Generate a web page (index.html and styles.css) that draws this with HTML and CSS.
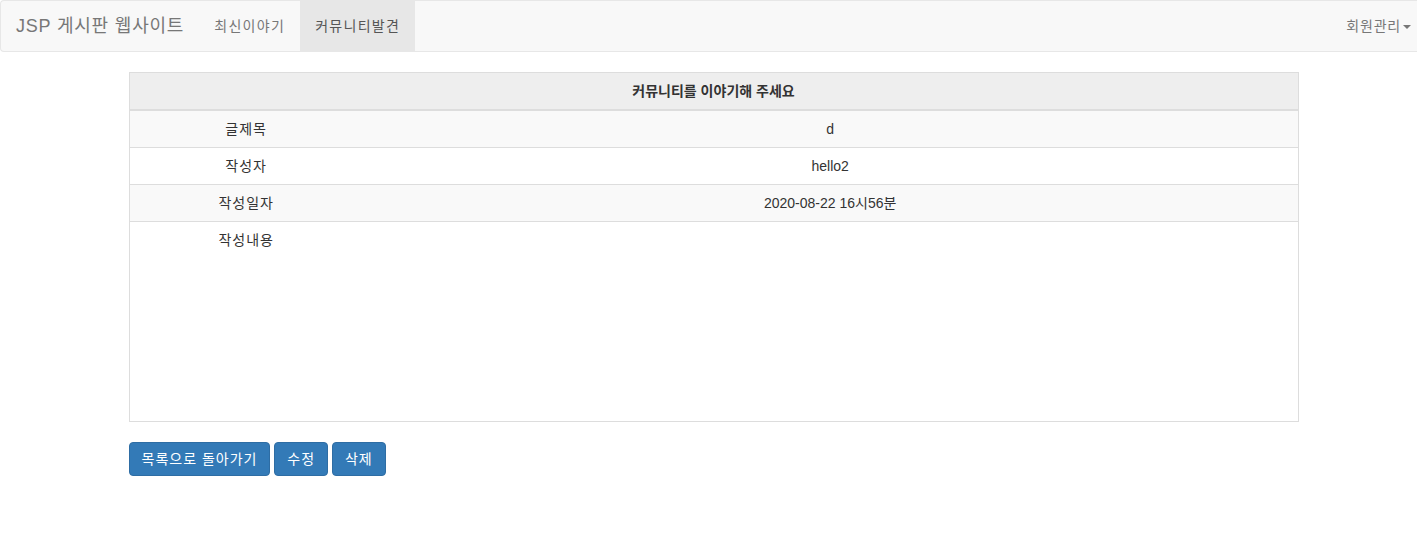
FILE: index.html
```html
<!DOCTYPE html>
<html lang="ko">
  <head>
    <meta charset="UTF-8" />
    <meta name="viewport" content="width=device-width, initial-scale=1.0" />
    <title>JSP 게시판 웹사이트</title>
    <link rel="stylesheet" href="styles.css">
  </head>
  <body>
    <nav class="navbar">
      <div class="navbar-left">
        <a class="navbar-brand" href="#">JSP 게시판 웹사이트</a>
        <ul class="nav">
          <li><a href="#">최신이야기</a></li>
          <li class="active"><a href="#">커뮤니티발견</a></li>
        </ul>
      </div>
      <ul class="nav nav-right">
        <li><a href="#">회원관리<span class="caret"></span></a></li>
      </ul>
    </nav>

    <div class="container">
      <!-- 게시글 보기 -->
      <table class="view-table">
        <thead>
          <tr>
            <th colspan="2">커뮤니티를 이야기해 주세요</th>
          </tr>
        </thead>
        <tbody>
          <tr>
            <td class="label-col">글제목</td>
            <td>d</td>
          </tr>
          <tr>
            <td class="label-col">작성자</td>
            <td>hello2</td>
          </tr>
          <tr>
            <td class="label-col">작성일자</td>
            <td>2020-08-22 16시56분</td>
          </tr>
          <tr>
            <td class="label-col content-cell">작성내용</td>
            <td class="content-cell"></td>
          </tr>
        </tbody>
      </table>

      <a href="#" class="btn">목록으로 돌아가기</a>
      <a href="#" class="btn">수정</a>
      <a href="#" class="btn">삭제</a>
    </div>
  </body>
</html>
```

FILE: styles.css
```css
body {
  margin: 0;
  font-family: "Liberation Sans", "Noto Sans CJK KR", sans-serif;
  font-size: 14px;
  line-height: 20px;
  color: #333;
  background-color: #fff;
}
a {
  text-decoration: none;
}
.navbar {
  display: flex;
  justify-content: space-between;
  height: 50px;
  background-color: #f8f8f8;
  border: 1px solid #e7e7e7;
  border-right: none;
  border-radius: 4px 0 0 4px;
  margin-bottom: 20px;
}
.navbar-left {
  display: flex;
}
.navbar-brand {
  padding: 15px;
  font-size: 18px;
  line-height: 20px;
  letter-spacing: 0.8px;
  color: #777;
}
.nav {
  display: flex;
  list-style: none;
  margin: 0;
  padding: 0;
}
.nav a {
  display: block;
  padding: 15px;
  letter-spacing: 1.3px;
  color: #777;
}
.nav .active a {
  background-color: #e7e7e7;
  color: #555;
}
.nav-right a {
  padding-right: 6px;
  letter-spacing: 0.8px;
}
.caret {
  display: inline-block;
  width: 0;
  height: 0;
  margin-left: 2px;
  vertical-align: middle;
  border-top: 4px solid;
  border-left: 4px solid transparent;
  border-right: 4px solid transparent;
}
.container {
  width: 1170px;
  margin-left: calc(50% - 580px);
}
.view-table {
  width: 100%;
  border-collapse: collapse;
  border: 1px solid #ddd;
  margin-bottom: 20px;
}
.view-table th,
.view-table td {
  padding: 8px;
  border: 1px solid #ddd;
  border-left: none;
  border-right: none;
  text-align: center;
  vertical-align: top;
}
.view-table th {
  background-color: #eee;
  border-bottom-width: 2px;
  font-weight: bold;
}
.view-table tbody tr:nth-child(odd) {
  background-color: #f9f9f9;
}
.label-col {
  width: 20%;
  letter-spacing: 1px;
}
.content-cell {
  height: 183px;
}
.btn {
  display: inline-block;
  padding: 6px 12px;
  font-size: 14px;
  line-height: 20px;
  letter-spacing: 1px;
  color: #fff;
  background-color: #337ab7;
  border: 1px solid #2e6da4;
  border-radius: 4px;
}
```
